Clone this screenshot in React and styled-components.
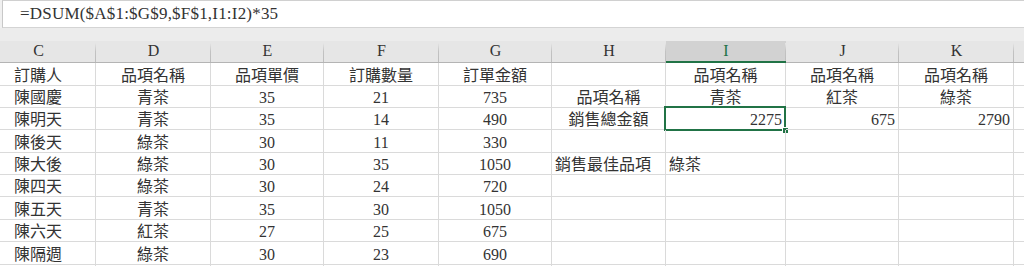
import React from "react";
import styled, { createGlobalStyle } from "styled-components";

const GlobalStyle = createGlobalStyle`
  html, body { margin: 0; padding: 0; background: #ffffff; overflow: hidden; }
  #root { width: 1024px; height: 266px; overflow: hidden; }
`;

const FONT = `"Liberation Serif", "Noto Sans CJK TC", serif`;
const GREEN = "#217346";
const WIDTHS = [115, 115, 113, 115, 113, 114, 120, 113, 115, 115];
const TEMPLATE = WIDTHS.map((w) => `${w}px`).join(" ");
const LETTERS = ["C", "D", "E", "F", "G", "H", "I", "J", "K", ""];
const ROW_HEIGHTS = [23, 22, 22, 23, 22, 22, 23, 22, 23, 22];
const SELECTED_COL = 6;

const Page = styled.div`
  width: 1024px;
  height: 266px;
  display: flex;
  flex-direction: column;
  background: #ececec;
  font-family: ${FONT};
  color: #333;
`;

const FormulaRow = styled.div`
  height: 28px;
  display: flex;
  padding-left: 2px;
  box-sizing: border-box;
  background: #f0f0f0;
`;

const FormulaBox = styled.div`
  flex: 1;
  background: #ffffff;
  border-left: 1px solid #c8c8c8;
  border-top: 1px solid #d0d0d0;
  border-bottom: 1px solid #d4d4d4;
  padding-left: 17px;
  display: flex;
  align-items: flex-end;
  font-size: 17px;
  line-height: 18px;
  padding-bottom: 4px;
  box-sizing: border-box;
  letter-spacing: 0.2px;
`;

const Gap = styled.div`
  height: 13px;
  background: #ececec;
`;

const SheetClip = styled.div`
  flex: 1;
  overflow: hidden;
  background: #ffffff;
`;

const Sheet = styled.div`
  margin-left: -19px;
  display: flex;
  flex-direction: column;
`;

const Row = styled.div`
  display: grid;
  grid-template-columns: ${TEMPLATE};
  height: ${(p) => p.$h}px;
`;

const HeaderCell = styled.div`
  position: relative;
  box-sizing: border-box;
  background: ${(p) => (p.$selected ? "#d2d2d2" : "#e6e6e6")};
  border-bottom: ${(p) => (p.$selected ? `2px solid ${GREEN}` : "1px solid #b4b4b4")};
  display: flex;
  align-items: flex-end;
  justify-content: center;
  font-size: 16px;
  line-height: 18px;
  padding-bottom: ${(p) => (p.$selected ? 1 : 2)}px;
  color: ${(p) => (p.$selected ? GREEN : "#333")};
  &::after {
    content: "";
    position: absolute;
    right: 0;
    top: 2px;
    bottom: 0;
    width: 1px;
    background: linear-gradient(#e6e6e6, #c2c2c2 45%, #bdbdbd);
  }
`;

const Cell = styled.div`
  position: relative;
  box-sizing: border-box;
  border-right: 1px solid #dadada;
  border-bottom: 1px solid #dadada;
  display: flex;
  align-items: flex-end;
  justify-content: ${(p) =>
    p.$align === "r" ? "flex-end" : p.$align === "l" ? "flex-start" : "center"};
  padding: 0 3px;
  font-size: 16px;
  line-height: 18px;
  white-space: nowrap;
  color: #333;
`;

const Selection = styled.div`
  position: absolute;
  top: -2px;
  left: -2px;
  right: -1px;
  bottom: -2px;
  border: 2px solid ${GREEN};
  pointer-events: none;
`;

const FillHandle = styled.div`
  position: absolute;
  right: -5px;
  bottom: -5px;
  width: 5px;
  height: 5px;
  background: ${GREEN};
  border: 1px solid #ffffff;
`;

const c = (v) => ({ v, a: "c" });
const r = (v) => ({ v, a: "r" });
const l = (v) => ({ v, a: "l" });

const DATA = [
  ["訂購人", "品項名稱", "品項單價", "訂購數量", "訂單金額", "", "品項名稱", "品項名稱", "品項名稱", ""],
  ["陳國慶", "青茶", "35", "21", "735", "品項名稱", "青茶", "紅茶", "綠茶", ""],
  ["陳明天", "青茶", "35", "14", "490", "銷售總金額", r("2275"), r("675"), r("2790"), ""],
  ["陳後天", "綠茶", "30", "11", "330", "", "", "", "", ""],
  ["陳大後", "綠茶", "30", "35", "1050", l("銷售最佳品項"), l("綠茶"), "", "", ""],
  ["陳四天", "綠茶", "30", "24", "720", "", "", "", "", ""],
  ["陳五天", "青茶", "35", "30", "1050", "", "", "", "", ""],
  ["陳六天", "紅茶", "27", "25", "675", "", "", "", "", ""],
  ["陳隔週", "綠茶", "30", "23", "690", "", "", "", "", ""],
  ["", "", "", "", "", "", "", "", "", ""],
];

export default function App() {
  return (
    <>
      <GlobalStyle />
      <Page>
        <FormulaRow>
          <FormulaBox>=DSUM($A$1:$G$9,$F$1,I1:I2)*35</FormulaBox>
        </FormulaRow>
        <Gap />
        <SheetClip>
          <Sheet>
            <Row $h={22}>
              {LETTERS.map((L, i) => (
                <HeaderCell key={i} $selected={i === SELECTED_COL}>
                  {L}
                </HeaderCell>
              ))}
            </Row>
            {DATA.map((row, ri) => (
              <Row key={ri} $h={ROW_HEIGHTS[ri]}>
                {row.map((cell, ci) => {
                  const item = typeof cell === "string" ? c(cell) : cell;
                  const selected = ri === 2 && ci === SELECTED_COL;
                  return (
                    <Cell key={ci} $align={item.a}>
                      {item.v}
                      {selected && (
                        <Selection>
                          <FillHandle />
                        </Selection>
                      )}
                    </Cell>
                  );
                })}
              </Row>
            ))}
          </Sheet>
        </SheetClip>
      </Page>
    </>
  );
}
